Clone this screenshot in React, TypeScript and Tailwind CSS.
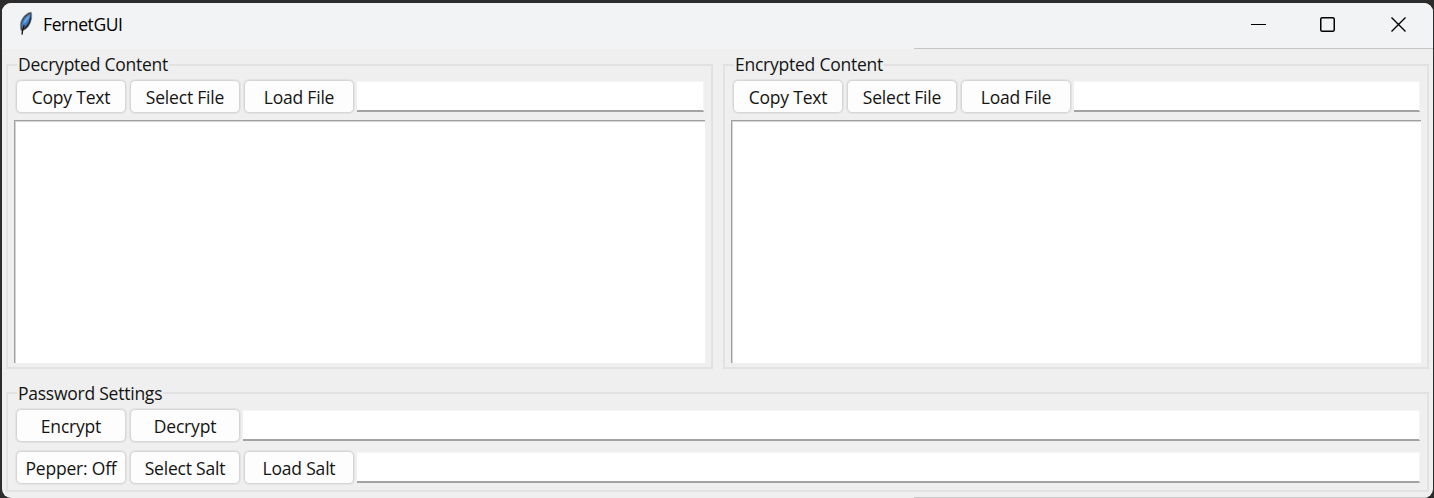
import type { ReactNode } from "react";

function Feather() {
  return (
    <svg width="16" height="25" viewBox="0 0 16 25" className="shrink-0">
      <path d="M13.3 1.2 C9 1.5 5.2 5.2 3.2 10 C2.2 13 2 16.5 3.2 19.8 C7 19.2 10.5 16.8 12 12.5 C13.4 9 14.4 5 13.3 1.2Z" fill="#3a4048" stroke="#8b8b86" strokeWidth=".8" />
      <path d="M12.4 2.4 C8.2 4.2 4.4 8.5 3.5 13 L3.8 18 C9.4 14.8 12.4 8.5 12.4 2.4Z" fill="#3f7fc6" />
      <path d="M11.6 4 C8.8 6 6 9.2 5.2 12.8 C8.8 10.8 11 7.8 11.6 4Z" fill="#6ea9e6" />
      <path d="M12.8 7 C11.8 12 9.5 16 5.2 18.6" fill="none" stroke="#25282c" strokeWidth="1.2" />
      <path d="M6.2 14 C5.2 16.5 4.3 19 4 23.6" fill="none" stroke="#17191c" strokeWidth="1.3" />
    </svg>
  );
}

function Label({ children, className }: { children: string; className: string }) {
  return <span className={`block whitespace-nowrap text-center ${className}`}>{children}</span>;
}

function Button({ children }: { children: string }) {
  return (
    <button className="m-px flex h-[33px] w-[110px] shrink-0 items-center justify-center rounded-[5px] border border-[#d6d6d6] bg-[#fdfdfd] text-[17.5px] leading-6 text-[#141414] shadow-[0_0_0_1px_#e3e3e3]">
      <Label className="tracking-[-0.2px]">{children}</Label>
    </button>
  );
}

function Entry() {
  return (
    <input className="mt-[2px] h-[31px] min-w-0 flex-1 border-b-2 border-r border-t border-b-[#a3a3a3] border-r-[#f4f4f4] border-t-[#f6f6f6] bg-white px-1 outline-none" />
  );
}

function Group({ title, className, leading, children }: { title: string; className: string; leading: string; children: ReactNode }) {
  return (
    <fieldset className={`min-w-0 border-2 border-[#e2e2e2] ${className}`}>
      <legend className={`ml-[9px] h-5 px-px text-[17.5px] text-[#141414] ${leading}`}>
        <Label className="tracking-[-0.24px]">{title}</Label>
      </legend>
      {children}
    </fieldset>
  );
}

function ContentGroup({ title, className, areaWidth }: { title: string; className: string; areaWidth: string }) {
  return (
    <Group title={title} leading="leading-[18px]" className={`h-[314px] ${className}`}>
      <div className="ml-[7px] mr-[7px] mt-1 flex h-[35px] gap-[2px]">
        <Button>Copy Text</Button>
        <Button>Select File</Button>
        <Button>Load File</Button>
        <Entry />
      </div>
      <textarea className={`ml-[6px] mt-[6px] block h-[243px] resize-none border-l border-t border-[#a0a0a0] bg-white shadow-[inset_1px_1px_0_#d4d4d4] outline-none ${areaWidth}`} />
    </Group>
  );
}

export default function App() {
  return (
    <div className="h-[498px] w-[1434px] overflow-hidden bg-[#2c2c2c] pl-[2px] pr-px pt-[3px] font-['Open_Sans','Noto_Sans',sans-serif]">
      <div className="flex h-[495px] w-[1431px] flex-col overflow-hidden rounded-[9px] bg-[#efefef]">
        <header className="flex h-[46px] shrink-0 flex-col bg-[#f2f3f5]">
          <div className="flex h-[45px] items-start">
            <div className="ml-[16px] mt-[8px]"><Feather /></div>
            <span className="ml-[9px] mt-[9px] text-[17.5px] leading-6 tracking-[-0.4px] text-black">FernetGUI</span>
            <div className="ml-auto mr-[25px] mt-[13px] flex gap-[52px]">
              <svg width="18" height="18" viewBox="0 0 18 18" fill="none" stroke="#000"><path d="M1 8.5H16" /></svg>
              <svg width="18" height="18" viewBox="0 0 18 18" fill="none" stroke="#000" strokeWidth="1.5"><rect x="0.75" y="1.75" width="13.5" height="13.5" rx="1.6" /></svg>
              <svg width="18" height="18" viewBox="0 0 18 18" fill="none" stroke="#000" strokeWidth="1.4"><path d="M1.5 1.5L15.5 15.5M15.5 1.5L1.5 15.5" /></svg>
            </div>
          </div>
          <div className="ml-[912px] h-px bg-[#c5c5c5]" />
        </header>
        <main className="flex h-[448px] flex-col">
          <div className="ml-[4px] mt-[6px] flex gap-[10px]">
            <ContentGroup title="Decrypted Content" className="w-[707px]" areaWidth="w-[691px]" />
            <ContentGroup title="Encrypted Content" className="w-[706px]" areaWidth="w-[690px]" />
          </div>
          <Group title="Password Settings" leading="leading-5" className="ml-[4px] mt-[14px] h-[109px] w-[1423px]">
            <div className="mx-[7px] mt-[5px] flex h-[35px] gap-[2px]">
              <Button>Encrypt</Button>
              <Button>Decrypt</Button>
              <Entry />
            </div>
            <div className="mx-[7px] mt-[7px] flex h-[35px] gap-[2px]">
              <Button>Pepper: Off</Button>
              <Button>Select Salt</Button>
              <Button>Load Salt</Button>
              <Entry />
            </div>
          </Group>
        </main>
        <div className="ml-[912px] mt-auto h-px bg-[#c8c8c8]" />
      </div>
    </div>
  );
}
